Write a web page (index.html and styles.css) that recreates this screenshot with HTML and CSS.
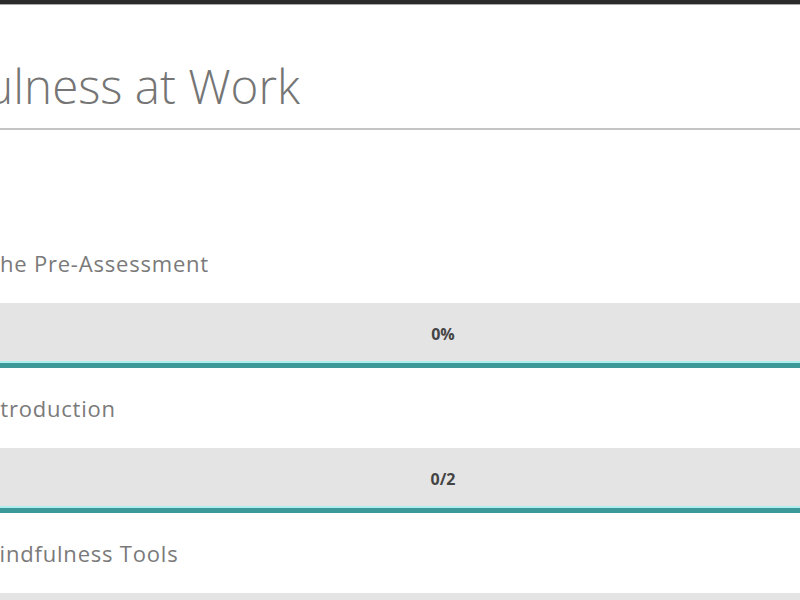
FILE: index.html
```html
<!DOCTYPE html>
<html lang="en">
<head>
  <meta charset="UTF-8" />
  <title>Mindfulness at Work</title>
  <link rel="stylesheet" href="styles.css">
</head>
<body>
  <div class="topbar"></div>
  <div class="page">
    <h1 class="course-title">Mindfulness at Work</h1>

    <ul class="modules">
      <li class="module">
        <div class="module-name module-name--first">The Pre-Assessment</div>
        <div class="progress">0%</div>
      </li>
      <li class="module">
        <div class="module-name">Introduction</div>
        <div class="progress">0/2</div>
      </li>
      <li class="module">
        <div class="module-name">Mindfulness Tools</div>
        <div class="progress">0/3</div>
      </li>
    </ul>
  </div>
</body>
</html>
```

FILE: styles.css
```css
body {
  margin: 0;
  font-family: "Open Sans", Arial, sans-serif;
  background-color: #fff;
  overflow: hidden;
  height: 600px;
}

.topbar {
  height: 4px;
  background-color: #2b2b2b;
  border-bottom: 1px solid #a9a9a9;
}

/* page is wider than the window, left part is cut off */
.page {
  margin-left: -140px;
  width: 1166px;
}

.course-title {
  margin: 0;
  padding: 52px 0 13px 3px;
  font-size: 47.5px;
  font-weight: 300;
  color: #757575;
  line-height: 58px;
  border-bottom: 2px solid #c4c4c4;
}

.modules {
  list-style: none;
  margin: 93px 0 0 0;
  padding: 0;
}

.module-name {
  padding-left: 119px;
  height: 80px;
  line-height: 80px;
  font-size: 22px;
  letter-spacing: 0.8px;
  color: #7a7a7a;
}

.module-name--first {
  padding-left: 127px;
}

.progress {
  height: 60px;
  line-height: 63px;
  background-color: #e4e4e4;
  text-align: center;
  font-size: 16px;
  font-weight: bold;
  color: #444;
  border-bottom: 5px solid #3d9999;
  box-shadow: inset 0 -2px 0 #aeeeee;
}
```
